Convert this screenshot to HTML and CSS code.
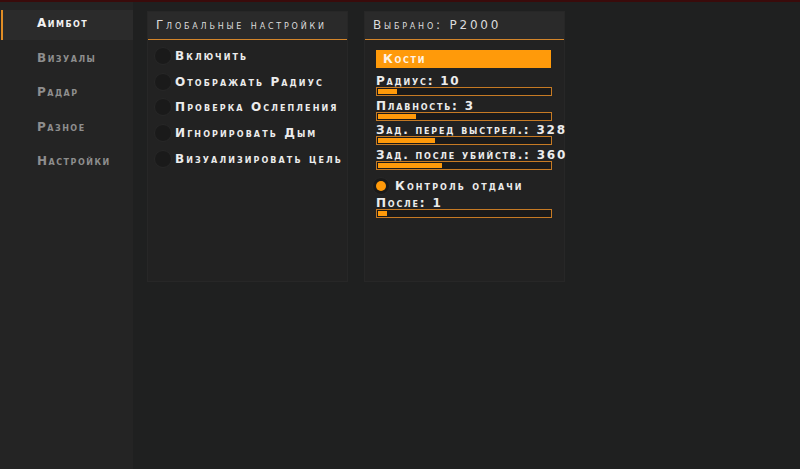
FILE: index.html
```html
<!DOCTYPE html>
<html lang="ru">
<head>
    <meta charset="UTF-8">
    <title>Меню</title>
    <link rel="stylesheet" href="styles.css">
</head>
<body>
    <div class="layout">
        <nav class="sidebar">
            <a class="tab active" href="#">Аимбот</a>
            <a class="tab" href="#">Визуалы</a>
            <a class="tab" href="#">Радар</a>
            <a class="tab" href="#">Разное</a>
            <a class="tab" href="#">Настройки</a>
        </nav>
        <main class="content">
            <section class="panel">
                <div class="panel-head">Глобальные настройки</div>
                <div class="panel-body checks">
                    <label class="check"><span class="box"></span>Включить</label>
                    <label class="check"><span class="box"></span>Отображать Радиус</label>
                    <label class="check"><span class="box"></span>Проверка Ослепления</label>
                    <label class="check"><span class="box"></span>Игнорировать Дым</label>
                    <label class="check"><span class="box"></span>Визуализировать цель</label>
                </div>
            </section>
            <section class="panel">
                <div class="panel-head">Выбрано: P2000</div>
                <div class="panel-body weapon">
                    <button class="select">Кости</button>
                    <div class="slider">
                        <div class="slider-label">Радиус: 10</div>
                        <div class="bar"><div class="fill" style="width: 11%"></div></div>
                    </div>
                    <div class="slider">
                        <div class="slider-label">Плавность: 3</div>
                        <div class="bar"><div class="fill" style="width: 22%"></div></div>
                    </div>
                    <div class="slider">
                        <div class="slider-label">Зад. перед выстрел.: 328</div>
                        <div class="bar"><div class="fill" style="width: 33%"></div></div>
                    </div>
                    <div class="slider">
                        <div class="slider-label">Зад. после убийств.: 360</div>
                        <div class="bar"><div class="fill" style="width: 37%"></div></div>
                    </div>
                    <label class="check recoil"><span class="box on"></span>Контроль отдачи</label>
                    <div class="slider">
                        <div class="slider-label">После: 1</div>
                        <div class="bar"><div class="fill" style="width: 5%"></div></div>
                    </div>
                </div>
            </section>
        </main>
    </div>
</body>
</html>
```

FILE: styles.css
```css
body {
    margin: 0;
    background-color: #1f2020;
    border-top: 2px solid #3a0b0b;
    font-family: "DejaVu Sans", Verdana, sans-serif;
    font-variant: small-caps;
    font-size: 12px;
    color: #ececec;
    overflow: hidden;
}
.layout {
    display: flex;
    height: 467px;
}
.sidebar {
    width: 133px;
    background: #242424;
    display: flex;
    flex-direction: column;
    gap: 4.5px;
    padding-top: 8px;
}
.tab {
    display: block;
    height: 30px;
    line-height: 27px;
    margin-left: 1px;
    padding-left: 34px;
    color: #8e8e8e;
    font-weight: bold;
    letter-spacing: 1.5px;
    text-decoration: none;
    border-left: 2px solid transparent;
}
.tab.active {
    background: #2b2b2b;
    color: #f2f2f2;
    border-left-color: #e08d25;
}
.content {
    display: flex;
    align-items: flex-start;
    gap: 16px;
    padding: 9px 14px;
}
.panel {
    width: 199px;
    height: 269px;
    background: #222222;
    border: 1px solid #272727;
}
.panel-head {
    height: 27px;
    line-height: 26px;
    padding-left: 8px;
    background: #2a2a2a;
    border-bottom: 1px solid #d3852a;
    color: #dcdcdc;
    letter-spacing: 2.8px;
    white-space: nowrap;
}
.checks {
    padding: 3px 0 0 6px;
}
.check {
    display: flex;
    align-items: center;
    gap: 3px;
    height: 25.75px;
    font-weight: bold;
    letter-spacing: 2.1px;
    white-space: nowrap;
}
.box {
    width: 18px;
    height: 18px;
    box-sizing: border-box;
    border-radius: 50%;
    background: #1a1a1a;
    border: 1px solid #272727;
    display: flex;
    align-items: center;
    justify-content: center;
    flex-shrink: 0;
}
.box.on::after {
    content: "";
    width: 10px;
    height: 10px;
    border-radius: 50%;
    background: #ff9a0a;
}
.weapon {
    padding: 10px 12px 0 11px;
}
.select {
    display: block;
    width: 175px;
    height: 18px;
    border: none;
    background: #ff9a0a;
    color: #fff4e6;
    font: inherit;
    font-weight: bold;
    letter-spacing: 1.7px;
    text-align: left;
    padding: 0 7px;
    margin-bottom: 8px;
}
.slider {
    margin-bottom: 4.5px;
}
.slider-label {
    font-weight: bold;
    letter-spacing: 1.8px;
    line-height: 11px;
    white-space: nowrap;
}
.bar {
    width: 172px;
    height: 5px;
    border: 1px solid #c67a24;
    background: #1a1a1a;
    padding: 1px;
    box-sizing: content-box;
}
.fill {
    height: 100%;
    background: #ff9a0a;
}
.recoil {
    margin-left: -4px;
    gap: 5px;
    height: 24px;
}
```
